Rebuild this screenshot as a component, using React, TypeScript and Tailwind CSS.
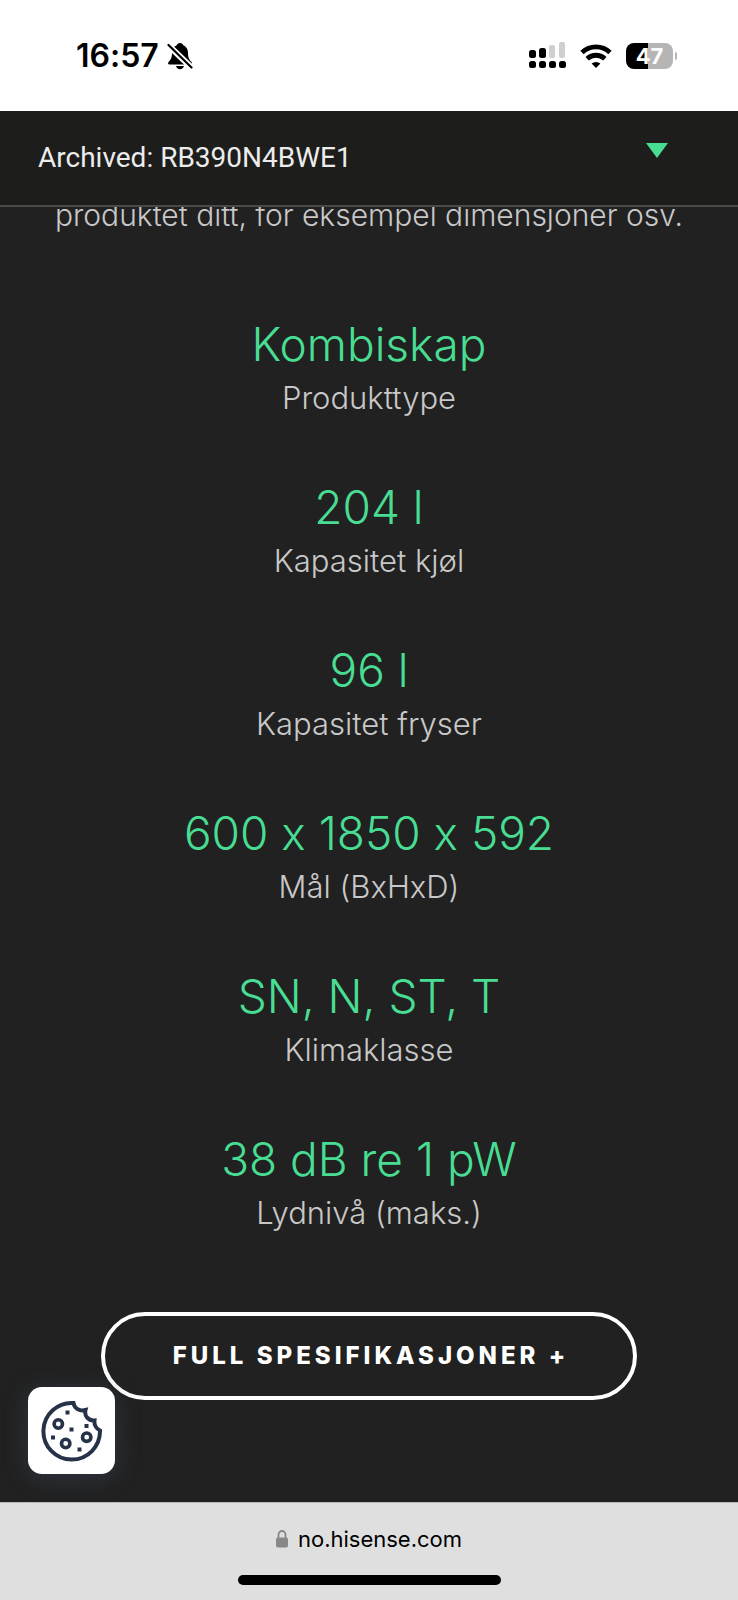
const specs = [
  { value: "Kombiskap", label: "Produkttype" },
  { value: "204 l", label: "Kapasitet kjøl" },
  { value: "96 l", label: "Kapasitet fryser" },
  { value: "600 x 1850 x 592", label: "Mål (BxHxD)" },
  { value: "SN, N, ST, T", label: "Klimaklasse" },
  { value: "38 dB re 1 pW", label: "Lydnivå (maks.)" },
];

function StatusBar() {
  return (
    <div className="flex h-[111px] items-center justify-between bg-white pr-[61px] pl-[76px] text-black">
      <div className="flex items-center gap-2">
        <span className="font-['Inter',sans-serif] text-[32px] leading-8 font-semibold">16:57</span>
        <svg className="h-7 w-[26px]" viewBox="0 0 26 28" aria-hidden>
          <path d="M13 1c-1.800 0-3 1-3.300 2.300C6.500 4.500 5 7.300 5 11c0 5-1.500 7-3.500 9-.9 1-.4 2.500 1 2.500h21c1.400 0 1.900-1.500 1-2.500-2-2-3.500-4-3.500-9 0-3.700-1.500-6.500-4.700-7.700C16 2 14.800 1 13 1z" />
          <path d="M9 24h8c-.4 2-2 3.200-4 3.200S9.400 26 9 24z" />
          <path d="M1 3l24 23" stroke="white" strokeWidth="6" />
          <path d="M1.500 3l23 22.500" stroke="black" strokeWidth="2.200" strokeLinecap="round" />
        </svg>
      </div>
      <div className="flex items-center gap-[14px]">
        <svg className="h-[27px] w-[37px]" viewBox="0 0 37 27" aria-hidden>
          <g fill="black">
            <rect x="0" y="8" width="7" height="8" rx="2.500" />
            <rect x="10" y="6" width="7" height="10" rx="2.500" />
            <rect x="0" y="19" width="7" height="7" rx="2.500" />
            <rect x="10" y="19" width="7" height="7" rx="2.500" />
            <rect x="20" y="19" width="7" height="7" rx="2.500" />
            <rect x="30" y="19" width="7" height="7" rx="2.500" />
          </g>
          <g fill="#cfcfcf">
            <rect x="20" y="3" width="6" height="13" rx="2" />
            <rect x="30" y="0" width="6" height="16" rx="2" />
          </g>
        </svg>
        <svg className="h-6 w-8" viewBox="0 0 32 24" fill="none" stroke="black" strokeWidth="4.800" aria-hidden>
          <path d="M2 8.500a20.500 20.500 0 0 1 28 0" />
          <path d="M7.200 14.700a13 13 0 0 1 17.600 0" />
          <path d="M16 24l-4.400-4.400a6.500 6.500 0 0 1 8.800 0z" fill="black" stroke="none" />
        </svg>
        <div className="flex items-center gap-[2px]">
          <div className="flex h-[26px] w-[47px] items-center justify-center rounded-lg bg-linear-to-r from-black from-47% to-[#b5b5b5] to-47% font-['Inter',sans-serif] text-[22px] leading-6 font-bold text-white">
            47
          </div>
          <div className="h-2 w-[2px] rounded-r-full bg-[#b5b5b5]" />
        </div>
      </div>
    </div>
  );
}

function CookieIcon() {
  return (
    <svg className="h-[62px] w-[62px]" viewBox="0 0 62 62" fill="none" stroke="#263248" strokeWidth="4" aria-hidden>
      <path d="M32.500 3A28.300 28.300 0 1 0 59 30.500C55.500 29 53 25 53.500 20.500C47.500 21 43 16 44.500 10C39 11.500 33.500 9 32.500 3z" />
      <g strokeWidth="3.600">
        <circle cx="17.300" cy="24" r="4.200" />
        <circle cx="24.700" cy="43.500" r="4.200" />
        <circle cx="45.700" cy="37.200" r="4.200" />
      </g>
      <g fill="#263248" stroke="none">
        <rect x="24.500" y="10.500" width="4" height="4" />
        <rect x="28.500" y="27.500" width="4" height="4" />
        <rect x="43.500" y="24" width="4" height="4" />
        <rect x="10" y="35.500" width="4" height="4" />
        <rect x="36.500" y="47.500" width="4" height="4" />
      </g>
    </svg>
  );
}

export default function App() {
  return (
    <div className="relative flex min-h-screen flex-col bg-[#212121] font-['Inter',sans-serif] text-[#c8c8c8] [font-feature-settings:'calt'_0] [font-variant-ligatures:none]">
      <StatusBar />
      <header className="relative z-10 flex h-24 items-center justify-between border-b-2 border-[#4a4a49] bg-[#1d1d1b] pr-[70px] pl-[38px]">
        <h1 className="font-['Roboto',sans-serif] text-[28px] leading-8 text-[#ececec]">Archived: RB390N4BWE1</h1>
        <button type="button" aria-label="Vis meny" className="pb-4">
          <svg className="h-[15px] w-[22px]" viewBox="0 0 22 15" fill="#48dd93" aria-hidden>
            <path d="M0 0h22L11 15z" />
          </svg>
        </button>
      </header>

      <main className="flex flex-1 flex-col items-center">
        <p className="-mt-3 text-center text-[30px] leading-10 font-light whitespace-nowrap">
          produktet ditt, for eksempel dimensjoner osv.
        </p>
        <dl className="mt-[75px] flex flex-col gap-[55px] text-center">
          {specs.map((spec) => (
            <div key={spec.label} className="flex flex-col-reverse">
              <dt className="text-[31px] leading-10 font-light">{spec.label}</dt>
              <dd className="text-[46px] leading-[68px] font-light text-[#48dd93]">{spec.value}</dd>
            </div>
          ))}
        </dl>
        <button
          type="button"
          className="mt-[79px] h-22 w-[536px] rounded-full border-4 border-white pl-1 text-[24px] leading-8 font-extrabold tracking-[4px] text-white"
        >
          FULL SPESIFIKASJONER +
        </button>
      </main>

      <button
        type="button"
        aria-label="Informasjonskapsler"
        className="absolute bottom-[126px] left-7 flex h-[87px] w-[87px] items-center justify-center rounded-[14px] bg-white shadow-[0_4px_24px_rgba(70,85,110,0.4)]"
      >
        <CookieIcon />
      </button>

      <footer className="flex h-[98px] flex-col items-center justify-between border-t border-[#b8b8b8] bg-[#dfdfdf] pt-5 pb-[15px] text-black">
        <a href="https://no.hisense.com" className="flex items-center gap-[10px] text-[22px] leading-8">
          <svg className="h-[18px] w-3" viewBox="0 0 12 18" aria-hidden>
            <path d="M2.500 8V5a3.500 4 0 0 1 7 0v3" fill="none" stroke="#88888b" strokeWidth="1.800" />
            <rect y="7.500" width="12" height="10" rx="1.800" fill="#88888b" />
          </svg>
          no.hisense.com
        </a>
        <div className="h-[10px] w-[263px] rounded-full bg-black" />
      </footer>
    </div>
  );
}
